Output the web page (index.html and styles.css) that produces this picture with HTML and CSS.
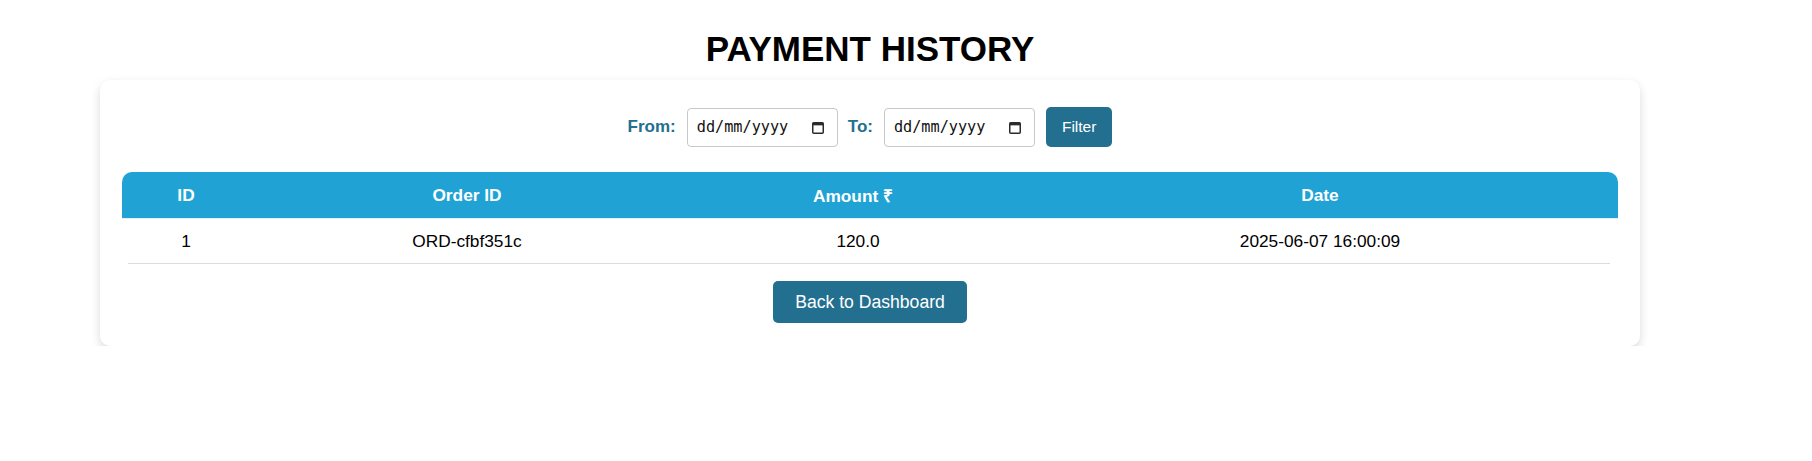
FILE: index.html
```html
<!DOCTYPE html>
<html lang="en">
<head>
<meta charset="utf-8">
<title>Payment History</title>
<link rel="stylesheet" href="styles.css">
</head>
<body>
<main class="page">
  <h1 class="title">PAYMENT HISTORY</h1>
  <section class="card">
    <form class="filters">
      <label class="filter-label">From:</label>
      <span class="date-field">
        <span class="date-text">dd/mm/yyyy</span>
        <svg class="cal-icon" width="12" height="13" viewBox="0 0 12 13" aria-hidden="true">
          <rect x="0.75" y="1.75" width="10.5" height="10.5" rx="1" fill="none" stroke="#2b2b2b" stroke-width="1.5"/>
          <rect x="0.75" y="1.75" width="10.5" height="2.6" fill="#2b2b2b"/>
        </svg>
      </span>
      <label class="filter-label">To:</label>
      <span class="date-field">
        <span class="date-text">dd/mm/yyyy</span>
        <svg class="cal-icon" width="12" height="13" viewBox="0 0 12 13" aria-hidden="true">
          <rect x="0.75" y="1.75" width="10.5" height="10.5" rx="1" fill="none" stroke="#2b2b2b" stroke-width="1.5"/>
          <rect x="0.75" y="1.75" width="10.5" height="2.6" fill="#2b2b2b"/>
        </svg>
      </span>
      <button type="button" class="btn btn-filter">Filter</button>
    </form>

    <div class="table">
      <div class="thead">
        <div class="cell">ID</div>
        <div class="cell">Order ID</div>
        <div class="cell">Amount ₹</div>
        <div class="cell">Date</div>
      </div>
      <div class="trow">
        <div class="cell">1</div>
        <div class="cell">ORD-cfbf351c</div>
        <div class="cell cell-amount">120.0</div>
        <div class="cell">2025-06-07 16:00:09</div>
      </div>
      <div class="row-rule"></div>
    </div>

    <div class="actions">
      <button type="button" class="btn btn-back">Back to Dashboard</button>
    </div>
  </section>
</main>
</body>
</html>
```

FILE: styles.css
```css
* {
  box-sizing: border-box;
}

html, body {
  margin: 0;
  background: #ffffff;
}

body {
  font-family: "Liberation Sans", Arial, sans-serif;
  color: #000;
}

.page {
  width: 1540px;
  margin-left: 100px;
  padding-top: 29px;
}

.title {
  margin: 0 0 11px;
  text-align: center;
  font-size: 35px;
  font-weight: 700;
  line-height: normal;
  color: #000;
}

.card {
  background: #fff;
  border-radius: 10px;
  box-shadow: 0 4px 10px rgba(0, 0, 0, 0.15);
  padding: 27px 22px 23px;
}

.filters {
  display: flex;
  justify-content: center;
  align-items: center;
  height: 40px;
  margin: 0;
}

.filter-label {
  font-size: 17px;
  font-weight: 700;
  color: #226f90;
  margin-right: 11px;
}

.date-field {
  display: flex;
  align-items: center;
  justify-content: space-between;
  width: 151px;
  height: 39px;
  border: 1px solid #c8c8c8;
  border-radius: 4px;
  padding: 0 13px 0 9px;
  margin-right: 10px;
  background: #fff;
}

.date-field:last-of-type {
  margin-right: 11px;
}

.date-text {
  font-family: "DejaVu Sans Mono", monospace;
  font-size: 15.2px;
  color: #111;
}

.cal-icon {
  display: block;
}

.btn {
  border: none;
  background: #226f90;
  color: #fff;
  font-family: "Liberation Sans", Arial, sans-serif;
  border-radius: 5px;
  cursor: pointer;
}

.btn-filter {
  height: 40px;
  padding: 0 16px;
  font-size: 15.5px;
}

.table {
  margin-top: 25px;
}

.thead,
.trow {
  display: grid;
  grid-template-columns: 128px 434px 338px 596px;
  text-align: center;
}

.thead {
  background: #20a3d4;
  color: #fff;
  font-weight: 700;
  font-size: 17.3px;
  border-radius: 10px 10px 0 0;
  height: 46px;
  align-items: center;
  border-bottom: 1px solid #e3f1f7;
  box-sizing: content-box;
}

.trow {
  font-size: 17.3px;
  height: 44px;
  align-items: center;
  color: #000;
}

.cell-amount {
  padding-left: 10px;
}

.row-rule {
  height: 1px;
  background: #dcdcdc;
  margin: 0 8px 0 6px;
}

.actions {
  display: flex;
  justify-content: center;
  margin-top: 17px;
}

.btn-back {
  height: 42px;
  padding: 0 22px;
  font-size: 17.6px;
}
```
